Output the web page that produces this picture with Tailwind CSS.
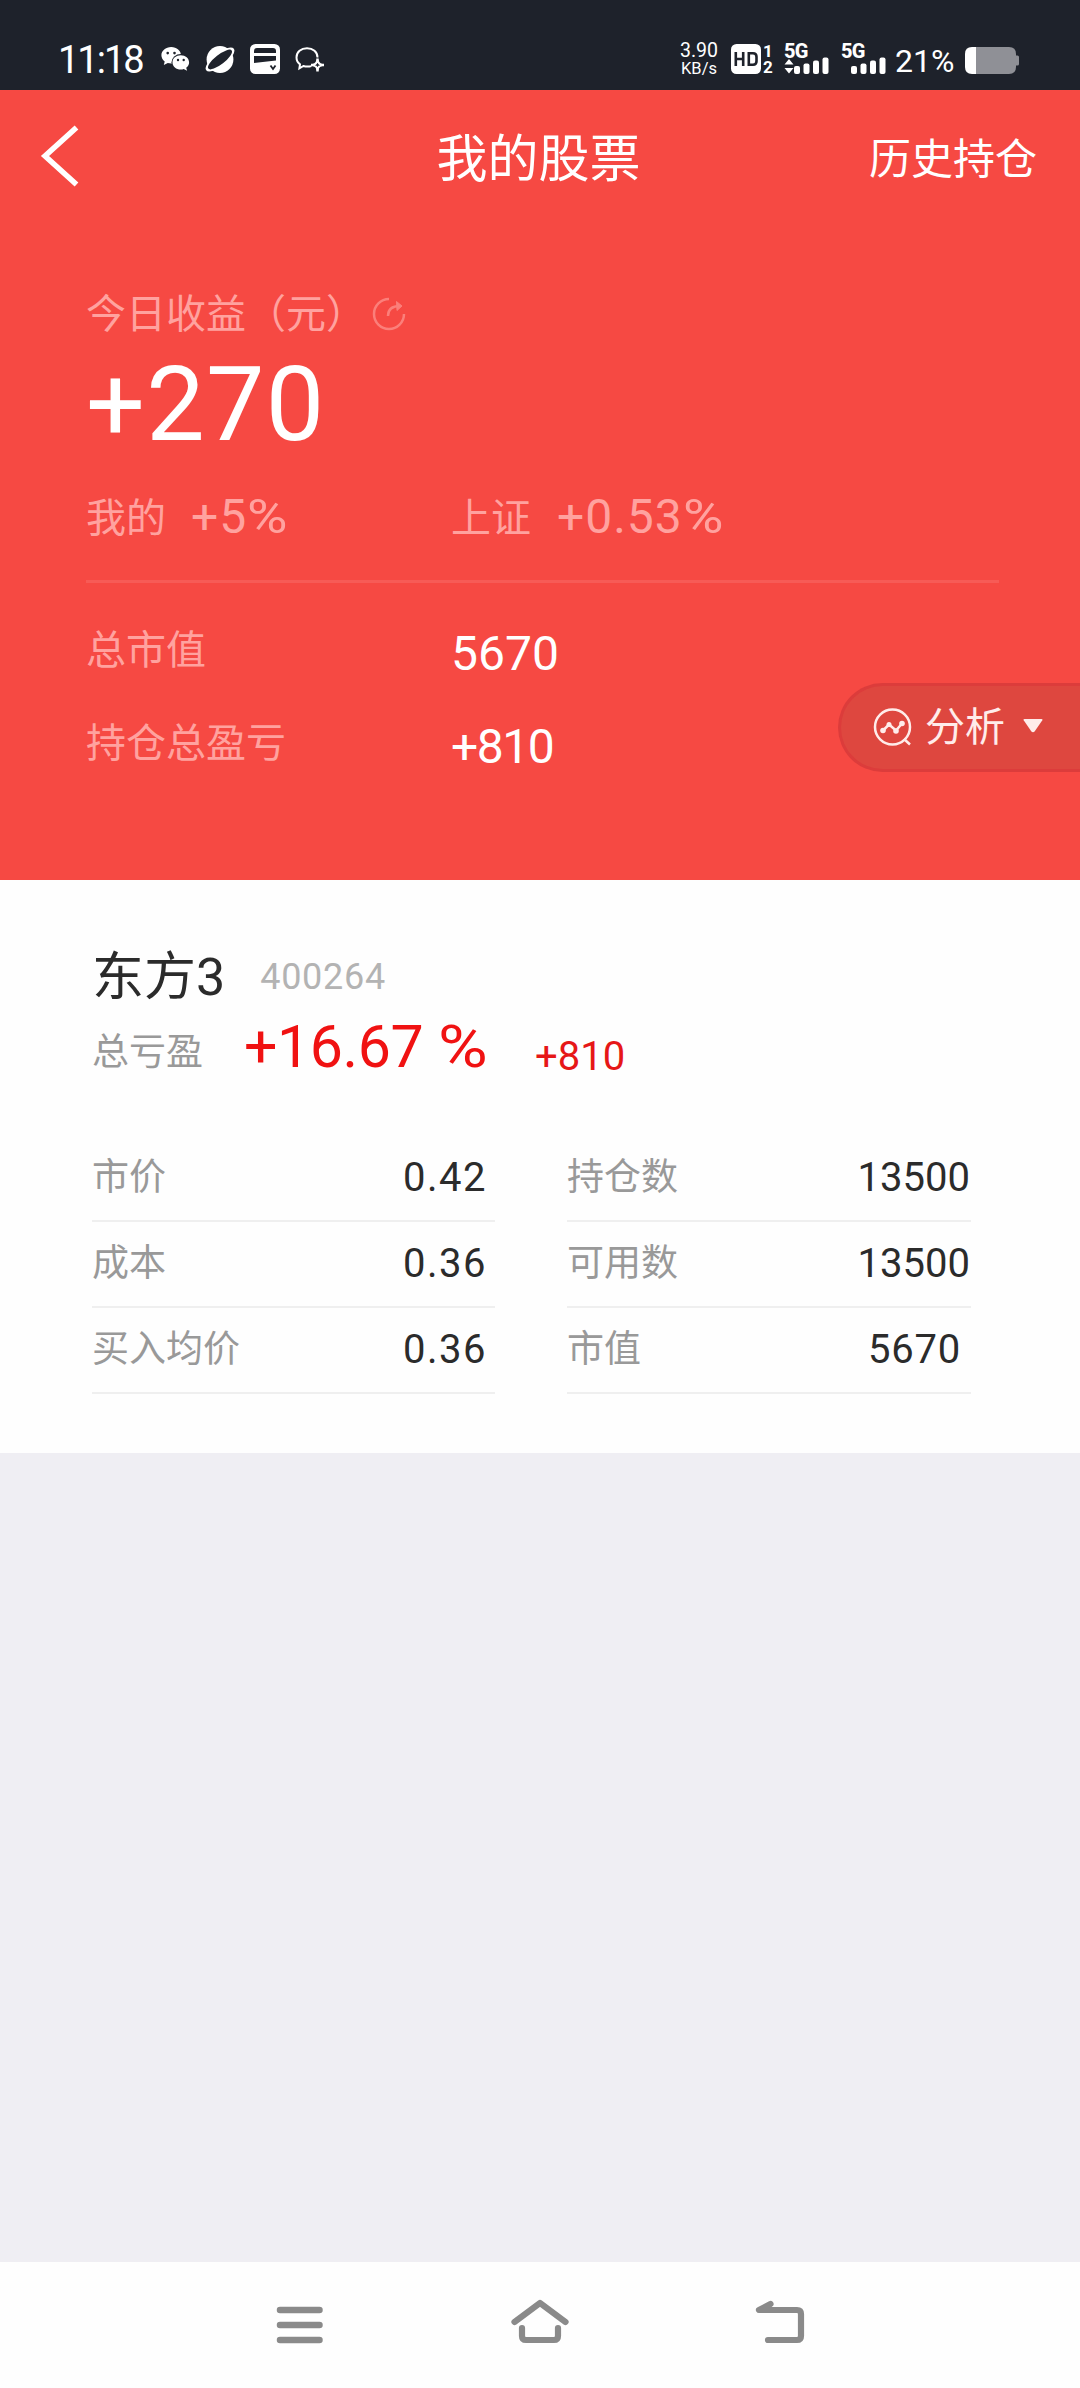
<!DOCTYPE html>
<html lang="zh-CN">
<head>
<meta charset="utf-8">
<title>我的股票</title>
<script src="https://cdn.jsdelivr.net/npm/@tailwindcss/browser@4"></script>
</head>
<body class="flex h-[2388px] w-[1080px] flex-col overflow-hidden bg-[#efeef3] font-['Roboto','Noto_Sans_CJK_SC',sans-serif] whitespace-nowrap">

<!-- status bar -->
<div class="flex h-[90px] shrink-0 items-start bg-[#1e222b] text-white">
  <div class="ml-[58px] mt-[40px] w-[103px] text-[38px] leading-[40px] tracking-[-2px]">11:18</div>
  <svg class="mt-[44px] h-[30px] w-[29px]" viewBox="0 0 29 30" fill="none">
    <path d="M10.2 3C4.700 3 .4 6.700 .4 11.300c0 2.600 1.300 4.700 3.300 6.200L2.800 21l4-2c1.100.3 2.200.5 3.400.5 5.500 0 9.800-3.700 9.800-8.200S15.700 3 10.200 3z" fill="#fff"/>
    <ellipse cx="19.800" cy="18.300" rx="9.300" ry="8.300" fill="#1e222b"/>
    <path d="M19.800 11.300c-4.700 0-8.300 3.100-8.300 7.100s3.600 7.100 8.300 7.100c1 0 2-.1 2.900-.5l3.400 1.800-.9-3c1.700-1.300 2.900-3.200 2.900-5.400 0-4-3.700-7.100-8.300-7.100z" fill="#fff"/>
    <circle cx="6.700" cy="9.100" r="1.300" fill="#1e222b"/><circle cx="13.500" cy="9.100" r="1.300" fill="#1e222b"/>
    <circle cx="17" cy="16" r="1.200" fill="#1e222b"/><circle cx="22.700" cy="16" r="1.200" fill="#1e222b"/>
  </svg>
  <svg class="ml-[14px] mt-[44px] h-[30px] w-[32px]" viewBox="0 0 32 30" fill="none">
    <circle cx="16" cy="15.500" r="13.400" fill="#fff"/>
    <ellipse cx="16" cy="15.500" rx="17.500" ry="6.600" transform="rotate(-38 16 15.500)" fill="#fff"/>
    <ellipse cx="16" cy="15.500" rx="14.800" ry="4.800" transform="rotate(-38 16 15.500)" fill="#1e222b"/>
  </svg>
  <svg class="ml-[14px] mt-[44px] h-[30px] w-[30px]" viewBox="0 0 30 30" fill="none">
    <rect width="30" height="30" rx="5.500" fill="#fff"/>
    <path d="M4 9V7q0-3 3-3h16q3 0 3 3v2zM4 12h22v4.500L4 19z" fill="#1e222b"/>
    <path d="M20.500 21.500l2.500 3.500 2.500-3.500" stroke="#1e222b" stroke-width="1.800"/>
  </svg>
  <svg class="ml-[15px] mt-[44px] h-[30px] w-[31px]" viewBox="0 0 31 30" fill="none" stroke="#fff" stroke-width="2">
    <path d="M22.500 13.500C22.500 8 18 4.200 12 4.200S1.500 8.200 1.500 13.500c0 3 1.400 5.300 3.500 6.900l-.6 4 4-2.400c2.600.8 5.300.8 8 .1"/>
    <path d="M22.500 16c.5 2.800 2 4.500 5 5-3 .5-4.500 2.200-5 5-.5-2.800-2-4.500-5-5 3-.5 4.500-2.200 5-5z"/>
    <path d="M22.500 14.500v3M22.500 24.500v3M16 21h3M26 21h3" stroke-width="2.500"/>
  </svg>

  <div class="ml-[351px] mt-[41px] w-[44px] text-center">
    <div class="text-[19.500px] leading-[20px]">3.90</div>
    <div class="text-[16.500px] leading-[16px]">KB/s</div>
  </div>
  <div class="ml-[10px] mt-[44px] flex h-[30px] w-[44px] gap-[2px]">
    <svg class="h-[30px] w-[30px]" viewBox="0 0 30 30" fill="#fff">
      <rect width="30" height="30" rx="5.500"/>
      <path d="M4.800 8v14M4.800 15h7.400M12.200 8v14M17.800 9.300h4.200q3.500 0 3.500 3.500v4.400q0 3.500-3.500 3.500h-4.200z" fill="none" stroke="#1e222b" stroke-width="2.600"/>
    </svg>
    <div class="flex flex-col text-[17px] leading-[16px] font-bold"><span class="-mt-px">1</span><span>2</span></div>
  </div>
  <div class="ml-[9px] mt-[42px] h-[34px] w-[46px]">
    <div class="h-[15px] text-[20px] leading-[19px] font-extrabold tracking-[-0.8px]">5G</div>
    <svg class="h-[19px] w-[46px]" viewBox="0 15 46 19" fill="#fff">
      <path d="M.5 22.500l4.500-5.500 4.500 5.500zM.5 26l4.500 5.500L9.500 26z"/>
      <rect x="10" y="24" width="6" height="8" rx="2"/><rect x="19.500" y="21.500" width="6" height="10.500" rx="2"/><rect x="29" y="18.500" width="6" height="13.500" rx="2"/><rect x="38.500" y="15.500" width="6" height="16.500" rx="2"/>
    </svg>
  </div>
  <div class="ml-[11px] mt-[42px] h-[34px] w-[46px]">
    <div class="h-[15px] text-[20px] leading-[19px] font-extrabold tracking-[-0.8px]">5G</div>
    <svg class="h-[19px] w-[46px]" viewBox="0 15 46 19" fill="#fff">
      <rect x="10" y="24" width="6" height="8" rx="2"/><rect x="19.500" y="21.500" width="6" height="10.500" rx="2"/><rect x="29" y="18.500" width="6" height="13.500" rx="2"/><rect x="38.500" y="15.500" width="6" height="16.500" rx="2"/>
    </svg>
  </div>
  <div class="ml-[8px] mt-[41px] w-[70px] text-[32px] leading-[40px]">21%</div>
  <svg class="mt-[47px] h-[27px] w-[55px]" viewBox="0 0 55 27">
    <path d="M11 0h33q7 0 7 7v1.500h1.500q1.500 0 1.500 1.500v7q0 1.500-1.500 1.500H51V20q0 7-7 7H11z" fill="#8f9096"/>
    <path d="M11 0H7Q0 0 0 7v13q0 7 7 7h4z" fill="#fff"/>
  </svg>
</div>

<!-- account summary -->
<div class="relative h-[790px] shrink-0 bg-[#f64943] text-white">
  <div class="grid h-[136px] grid-cols-[1fr_auto_1fr] items-center pr-[43px] pl-[40px]">
    <svg class="-mt-[4px] h-[64px] w-[42px]" viewBox="0 0 42 64" fill="none"><path d="M36.500 3.500L5 32l31.500 28.500" stroke="#fff" stroke-width="5.500"/></svg>
    <h1 class="pt-[4px] text-[51px] leading-[60px]">我的股票</h1>
    <a class="pt-[3px] text-right text-[42px] leading-[60px]">历史持仓</a>
  </div>
  <div class="px-[86px] text-[#ffa29f]">
    <div class="mt-[68px] flex h-[41px] items-center text-[40px] leading-[41px]">
      <span>今日收益（元）</span>
      <svg class="-mt-[2px] ml-[6px] h-[34px] w-[34px] text-[#fb7f7a]" viewBox="0 0 34 34" fill="none" stroke="currentColor" stroke-width="2.500">
        <path d="M17 2A15 15 0 1 0 32 17"/><path d="M16 19c0-7 4-10 12-10"/><path d="M24.500 4.500l5.500 4.500-5 4.500z" fill="currentColor" stroke-width="1"/>
      </svg>
    </div>
    <div class="mt-[18px] h-[104px] text-[104px] leading-[104px] tracking-[1.300px] text-white">+270</div>
    <div class="mt-[37px] flex h-[48px] leading-[48px]">
      <div class="flex w-[365px] gap-[25px]"><span class="pt-px text-[40px]">我的</span><span class="-mt-px text-[48px] tracking-[1px]">+5<span class="inline-block origin-left scale-x-115">%</span></span></div>
      <div class="flex gap-[26px]"><span class="pt-px text-[40px]">上证</span><span class="-mt-px text-[48px] tracking-[1px]">+0.53<span class="inline-block origin-left scale-x-115">%</span></span></div>
    </div>
    <div class="mt-[38px] mr-[-5px] h-[3px] bg-white/10"></div>
    <div class="mt-[43px] flex h-[50px] leading-[50px]"><span class="w-[365px] text-[40px]">总市值</span><span class="pt-[3px] text-[48px] text-white">5670</span></div>
    <div class="mt-[43px] flex h-[50px] leading-[50px]"><span class="w-[365px] text-[40px]">持仓总盈亏</span><span class="pt-[3px] text-[48px] tracking-[-1.500px] text-white">+810</span></div>
  </div>
  <!-- floating analysis button -->
  <button class="absolute top-[593px] right-0 flex h-[89px] w-[242px] items-center rounded-l-full border-[3px] border-r-0 border-[#dc3c3b] bg-[#de473f] pl-[31px] text-[#ffecea]">
    <svg class="-mt-[2px] h-[40px] w-[40px]" viewBox="0 0 40 40" fill="none" stroke="currentColor" stroke-width="2.500">
      <circle cx="20.500" cy="20" r="17.500"/><path d="M32 32l6 5.500M11 23.500l6-6 7 6 6-7"/>
      <g fill="currentColor" stroke="none"><circle cx="11" cy="23.500" r="2.800"/><circle cx="17" cy="17.500" r="2.500"/><circle cx="24" cy="24" r="2.800"/><circle cx="30" cy="16.500" r="2.800"/></g>
    </svg>
    <span class="ml-[13px] pt-px text-[40px] leading-[44px]">分析</span>
    <svg class="-mt-[3px] ml-[18px] h-[14px] w-[20px]" viewBox="0 0 20 14" fill="currentColor"><path d="M1.500 0h17q1.500 0 .8 1.300l-7.500 11q-1.800 2-3.600 0L.7 1.300Q0 0 1.500 0z"/></svg>
  </button>
</div>

<!-- holding -->
<div class="h-[573px] shrink-0 bg-[#fefefe] px-[92px] pt-[67px] text-[#2b2b2b]">
  <div class="flex h-[60px] leading-[60px]">
    <span class="pt-px text-[52px]">东方3</span>
    <span class="ml-[35px] text-[36px] tracking-[0.700px] text-[#b3b3b3]">400264</span>
  </div>
  <div class="mt-[5px] flex h-[70px] leading-[70px] text-[#e61717]">
    <span class="w-[152px] pt-[6px] text-[37px] text-[#999]">总亏盈</span>
    <span class="w-[291px] text-[59px] tracking-[-0.400px] text-[#f01212]">+16.67 <span class="inline-block origin-left scale-x-115">%</span></span>
    <span class="pt-[10px] text-[40px]">+810</span>
  </div>
  <div class="mt-[54px] grid w-[879px] grid-cols-[403px_404px] gap-x-[72px] text-[40px] leading-[84px]">
    <div class="flex h-[86px] justify-between border-b-2 border-[#efefef] pr-[8px]"><span class="text-[37px] text-[#999]">市价</span><span class="tracking-[1.500px]">0.42</span></div>
    <div class="flex h-[86px] justify-between border-b-2 border-[#efefef] pr-[1px]"><span class="text-[37px] text-[#999]">持仓数</span><span>13500</span></div>
    <div class="flex h-[86px] justify-between border-b-2 border-[#efefef] pr-[8px]"><span class="text-[37px] text-[#999]">成本</span><span class="tracking-[1.500px]">0.36</span></div>
    <div class="flex h-[86px] justify-between border-b-2 border-[#efefef] pr-[1px]"><span class="text-[37px] text-[#999]">可用数</span><span>13500</span></div>
    <div class="flex h-[86px] justify-between border-b-2 border-[#efefef] pr-[8px]"><span class="text-[37px] text-[#999]">买入均价</span><span class="tracking-[1.500px]">0.36</span></div>
    <div class="flex h-[86px] justify-between border-b-2 border-[#efefef] pr-[10px]"><span class="text-[37px] text-[#999]">市值</span><span class="tracking-[0.800px]">5670</span></div>
  </div>
</div>

<!-- system navigation -->
<div class="mt-auto flex h-[126px] shrink-0 items-start justify-center gap-[180px] bg-[#fefefe] pt-[36px]">
  <svg class="h-[48px] w-[60px]" viewBox="0 0 60 48" fill="none" stroke="#8a8a8a" stroke-width="6.500" stroke-linecap="round"><path d="M10 12h39.500M10 27h39.500M10 42h39.500"/></svg>
  <svg class="h-[48px] w-[60px]" viewBox="0 0 60 48" fill="none" stroke="#8a8a8a" stroke-width="6.200" stroke-linecap="round" stroke-linejoin="round"><path d="M4.500 24L30 5l25.500 19M12 30v8q0 4 4 4h28q4 0 4-4v-8"/></svg>
  <svg class="h-[48px] w-[60px]" viewBox="0 0 60 48" fill="none" stroke="#8a8a8a" stroke-width="6.200" stroke-linecap="round" stroke-linejoin="round"><path d="M20.500 6L9 12h38q4 0 4 4v22q0 4-4 4H18"/></svg>
</div>
</body>
</html>
